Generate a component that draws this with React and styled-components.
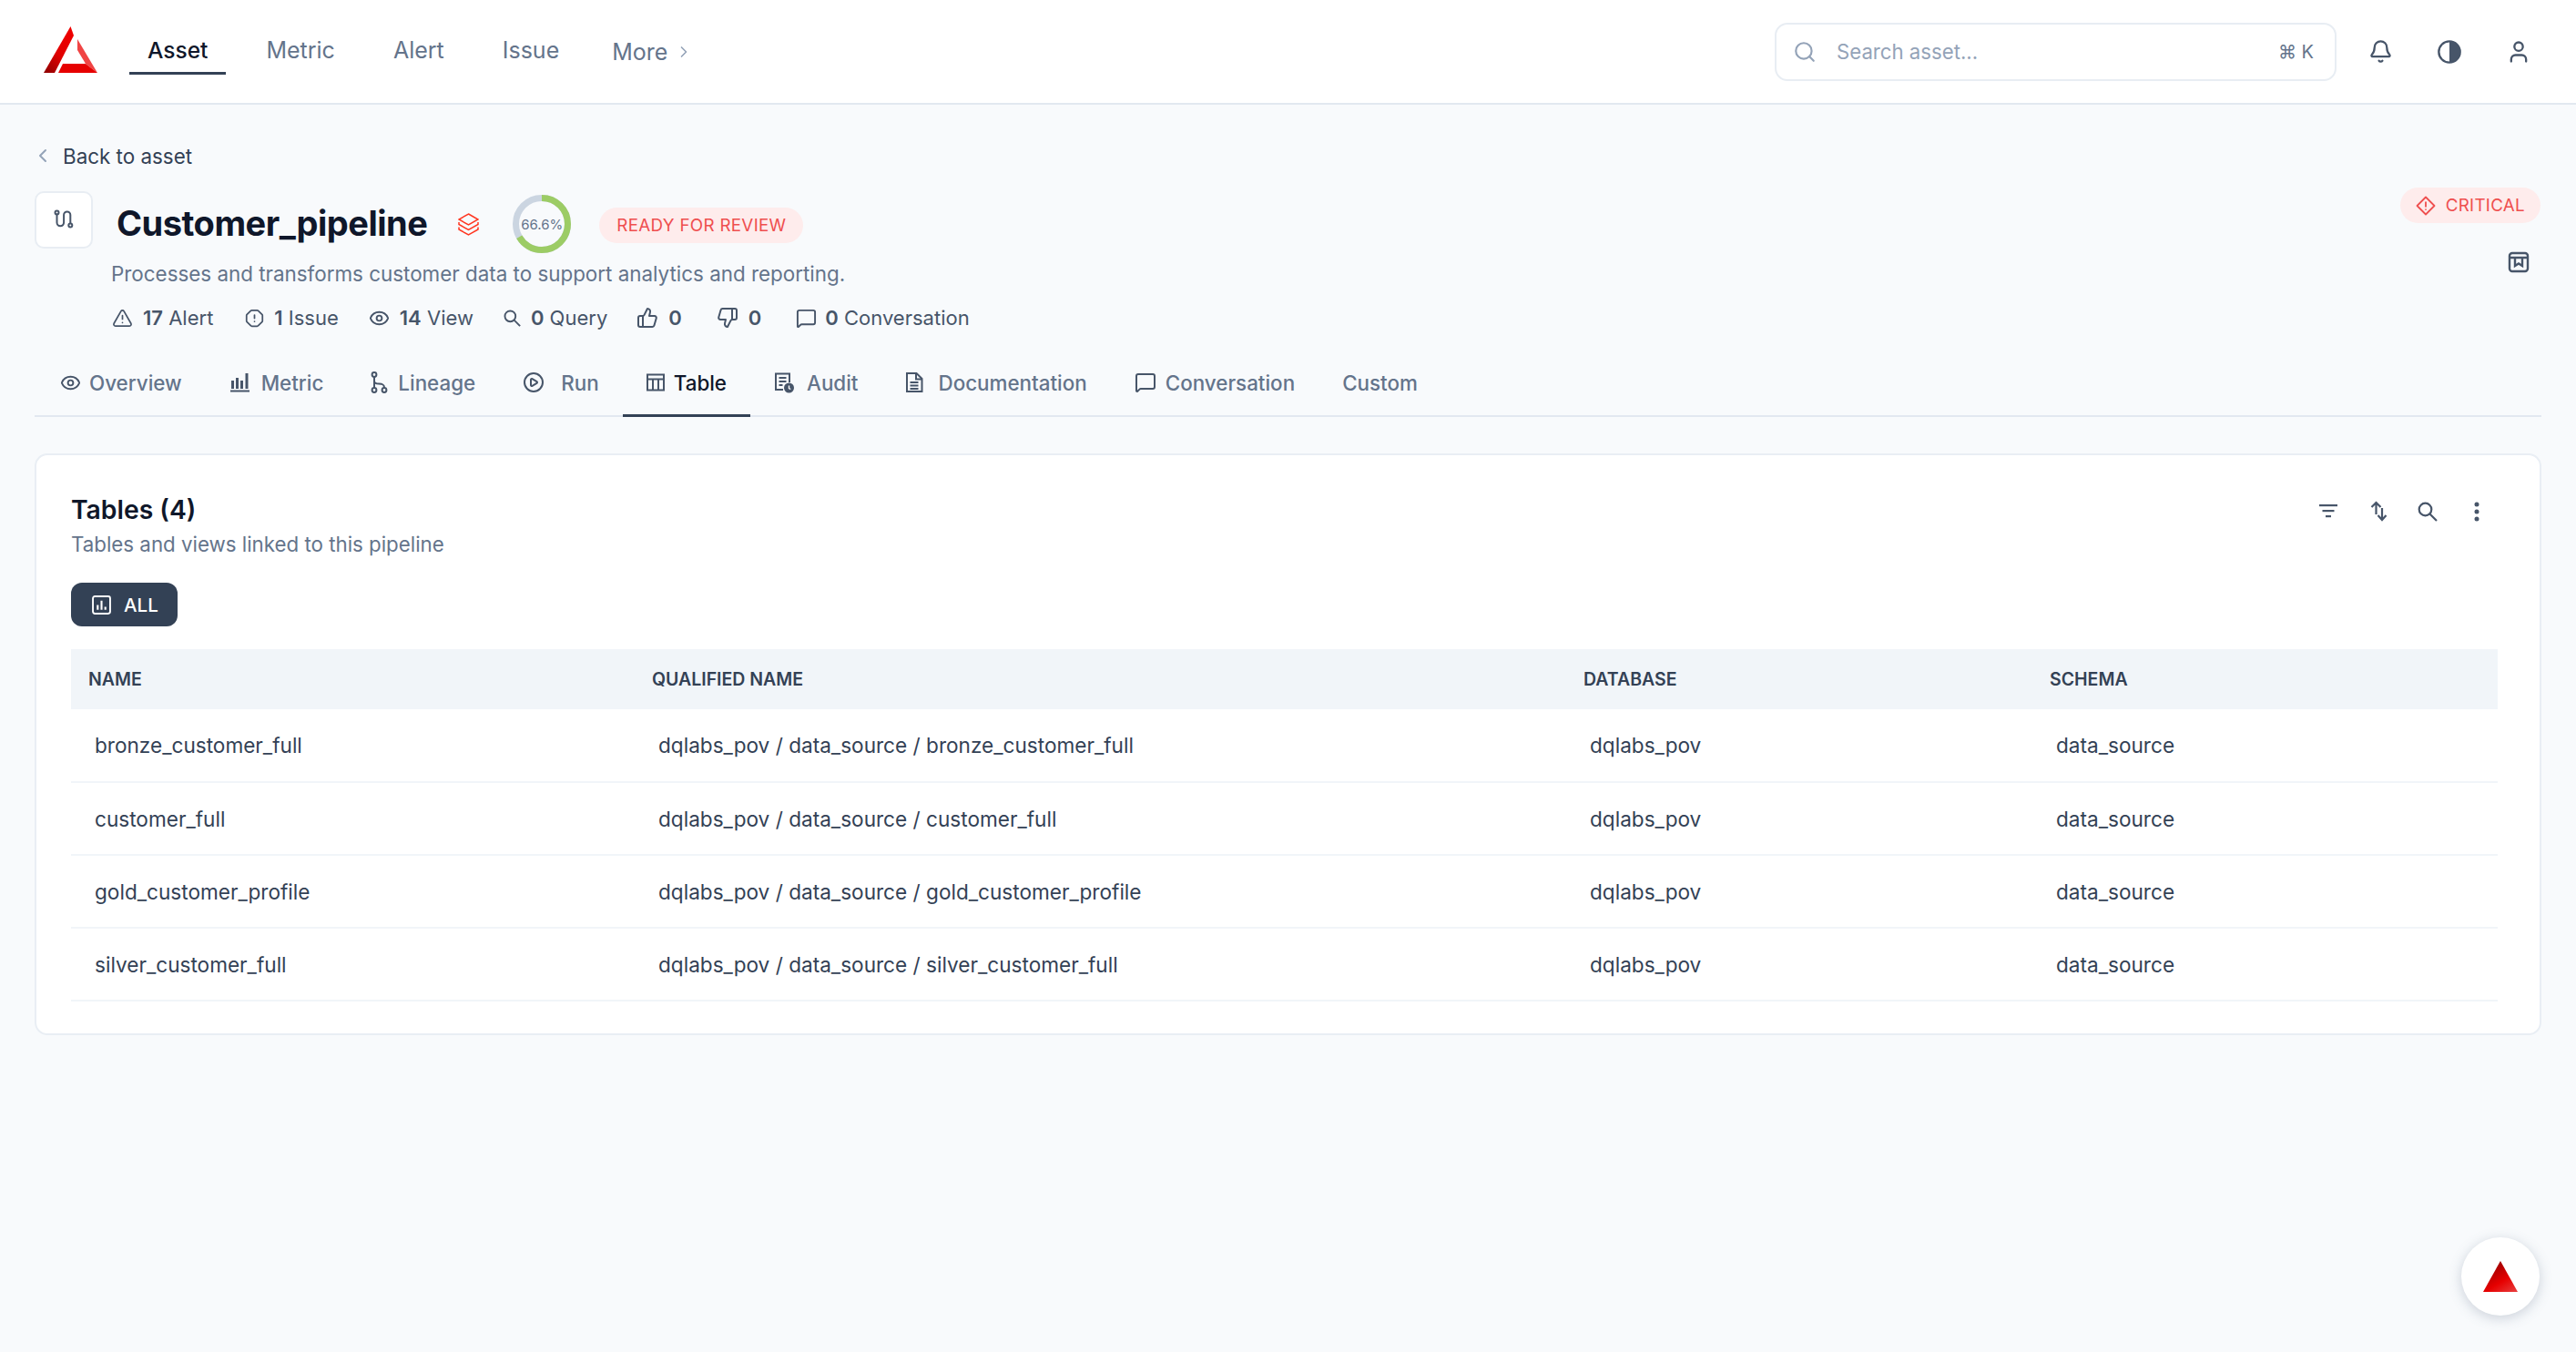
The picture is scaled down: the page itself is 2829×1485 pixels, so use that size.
import React from "react";
import styled, { createGlobalStyle } from "styled-components";
import {
  Bell,
  ChevronLeft,
  ChevronRight,
  CirclePlay,
  Eye,
  MessageSquare,
  OctagonAlert,
  Search,
  ThumbsDown,
  ThumbsUp,
  TriangleAlert,
  User
} from "lucide-react";

const GlobalStyle = createGlobalStyle`
  * { box-sizing: border-box; }
  html, body { margin: 0; padding: 0; background: #f8fafc; }
  body { font-family: Inter, "Noto Sans", sans-serif; color: #334155; }
`;

const Page = styled.div`
  position: relative;
  min-height: 1485px;
  background: #f8fafc;
`;

/* top bar */
const Header = styled.header`
  height: 115px;
  background: #fff;
  border-bottom: 2px solid #e2e8f0;
  display: flex;
  align-items: center;
  padding: 0 49px 0 48px;
`;
const Logo = styled.svg`
  width: 59px;
  height: 51px;
  flex: none;
  margin-top: -4px;
`;
const MainNav = styled.nav`
  display: flex;
  align-items: stretch;
  gap: 24px;
  height: 58px;
  margin-left: 35px;
  align-self: flex-end;
  margin-bottom: 31px;
`;
const NavLink = styled.a`
  display: flex;
  align-items: center;
  gap: 8px;
  padding: ${(p) => (p.$more ? 11 : 7)}px 20px 0;
  margin-left: ${(p) => (p.$more ? -6 : 0)}px;
  font-size: ${(p) => (p.$active ? 24.5 : 25)}px;
  font-weight: ${(p) => (p.$active ? 500 : 400)};
  color: ${(p) => (p.$active ? "#0f172a" : "#64748b")};
  border-bottom: 3px solid ${(p) => (p.$active ? "#334155" : "transparent")};
`;
const SearchBox = styled.div`
  margin-left: auto;
  width: 617px;
  height: 64px;
  display: flex;
  align-items: center;
  gap: 22px;
  padding: 0 23px 0 18px;
  background: #fff;
  border: 2px solid #e8edf3;
  border-radius: 14px;
  color: #94a3b8;
  font-size: 22.2px;
`;
const Shortcut = styled.span`
  margin-left: auto;
  font-size: 20px;
  color: #64748b;
`;
const HeaderIcons = styled.div`
  display: flex;
  align-items: center;
  gap: 48px;
  margin-left: 35px;
  color: #475569;
`;

/* asset heading */
const Main = styled.main`
  padding: 0 38px;
`;
const BackLink = styled.a`
  display: flex;
  align-items: center;
  gap: 10px;
  height: 34px;
  margin: 39px 0 0 -3px;
  font-size: 22.4px;
  color: #334155;
  svg { color: #94a3b8; }
`;
const AssetHead = styled.div`
  display: flex;
  justify-content: space-between;
  margin-top: 26px;
  padding-right: 1px;
`;
const AssetInfo = styled.div`
  display: flex;
  flex-direction: column;
`;
const TitleRow = styled.div`
  display: flex;
  align-items: center;
  height: 64px;
`;
const IconTile = styled.div`
  width: 64px;
  height: 63px;
  display: flex;
  align-items: center;
  justify-content: center;
  background: #fff;
  border: 2px solid #e8edf3;
  border-radius: 10px;
  color: #475569;
  margin-top: -10px;
`;
const Title = styled.h1`
  margin: -2px 0 0 26px;
  font-size: 38px;
  font-weight: 700;
  letter-spacing: -0.5px;
  color: #0f172a;
`;
const Ring = styled.div`
  position: relative;
  width: 64px;
  height: 64px;
  margin-left: 37px;
  display: flex;
  align-items: center;
  justify-content: center;
  font-size: 15px;
  color: #64748b;
  svg { position: absolute; inset: 0; }
`;
const Pill = styled.span`
  display: inline-flex;
  align-items: center;
  gap: 11px;
  height: 39px;
  padding: 0 ${(p) => p.$pad || 19}px;
  border-radius: 20px;
  background: #feecec;
  color: #ef4f4f;
  font-size: 18.8px;
  letter-spacing: 0.3px;
`;
const StatusPill = styled(Pill)`
  margin-left: 31px;
  margin-top: 2px;
`;
const Description = styled.p`
  margin: 9px 0 0 84px;
  line-height: 28px;
  font-size: 22.4px;
  color: #64748b;
`;
const Stats = styled.div`
  display: flex;
  align-items: center;
  height: 30px;
  margin: 19px 0 0 85px;
  font-size: 22px;
  color: #475569;
`;
const Stat = styled.span`
  display: flex;
  align-items: center;
  gap: ${(p) => p.$gap || 11}px;
  margin-right: ${(p) => p.$mr || 33}px;
  white-space: nowrap;
  b { font-weight: 600; }
  svg { color: #475569; flex: none; }
`;
const AssetSide = styled.div`
  display: flex;
  flex-direction: column;
  align-items: flex-end;
  margin-top: -8px;
  color: #475569;
  gap: 31px;
`;
const SideIcon = styled.svg`
  margin-right: 12px;
`;

/* tabs */
const Tabs = styled.div`
  display: flex;
  height: 78px;
  margin-top: 16px;
  padding: 0 2px;
  border-bottom: 2px solid #e2e8f0;
`;
const Tab = styled.a`
  display: flex;
  align-items: center;
  gap: ${(p) => p.$gap || 12}px;
  height: 78px;
  padding: 5px 26px 0;
  font-size: 22.4px;
  font-weight: 500;
  color: ${(p) => (p.$active ? "#0f172a" : "#64748b")};
  border-bottom: 3px solid ${(p) => (p.$active ? "#334155" : "transparent")};
  svg { color: #475569; flex: none; }
`;

/* tables card */
const Card = styled.section`
  margin-top: 40px;
  height: 639px;
  padding: 41px 46px 0 38px;
  background: #fff;
  border: 2px solid #e9eef4;
  border-radius: 14px;
`;
const CardHead = styled.div`
  display: flex;
  justify-content: space-between;
  align-items: flex-start;
`;
const CardTitle = styled.h2`
  margin: 0;
  line-height: 38px;
  font-size: 28.3px;
  font-weight: 600;
  color: #0f172a;
`;
const CardSub = styled.p`
  margin: 4px 0 0;
  line-height: 30px;
  font-size: 22.3px;
  color: #64748b;
`;
const Tools = styled.div`
  display: flex;
  align-items: center;
  gap: 36px;
  padding: 9px 20px 0 0;
  color: #475569;
`;
const ToolSearch = styled.svg`
  margin: 0 4px 0 -4px;
`;
const FilterButton = styled.button`
  display: inline-flex;
  align-items: center;
  gap: 14px;
  height: 48px;
  margin-top: 27px;
  padding: 0 21px 0 23px;
  border: 0;
  border-radius: 12px;
  background: #334155;
  color: #fff;
  font: 500 20.5px Inter, sans-serif;
`;
const Table = styled.table`
  width: 100%;
  margin-top: 25px;
  border-collapse: collapse;
  table-layout: fixed;
`;
const Th = styled.th`
  height: 66px;
  width: ${(p) => p.$w}px;
  padding: 0 0 0 19px;
  background: #f1f5f9;
  text-align: left;
  font-size: 19.5px;
  font-weight: 600;
  color: #334155;
  text-transform: uppercase;
`;
const Td = styled.td`
  height: 80px;
  padding: 0 0 0 26px;
  border-bottom: 2px solid #f1f5f9;
  font-size: 22.6px;
  color: #334155;
`;

const ChatFab = styled.button`
  position: absolute;
  left: 2703px;
  top: 1359px;
  width: 86px;
  height: 86px;
  display: flex;
  align-items: center;
  justify-content: center;
  border: 0;
  border-radius: 50%;
  background: #fff;
  box-shadow: 0 3px 14px rgba(100, 116, 139, 0.3);
`;

const PipelineIcon = () => (
  <svg width="22" height="24" viewBox="0 0 22 22" fill="none" stroke="currentColor" strokeWidth="2">
    <circle cx="3.5" cy="3.5" r="2" />
    <path d="M3.5 5.5V14.5a3.8 3.8 0 0 0 7.6 0V6a3.6 3.6 0 0 1 7.2 0V15" strokeLinecap="round" />
    <circle cx="18.3" cy="17.5" r="2" />
  </svg>
);
const StackIcon = () => (
  <svg width="23" height="25" viewBox="0 0 23 25" fill="none" stroke="#ff3621" strokeWidth="1.5" style={{ marginLeft: 34 }}>
    <path d="M11.5 1 22 7 11.5 13 1 7Z" />
    <path d="M1 10v2.5l10.5 6 10.5-6V10" />
    <path d="M1 15.5V18l10.5 6L22 18v-2.5" />
  </svg>
);
const QueryIcon = ({ size = 22 }) => (
  <svg width={size} height={size} viewBox="0 0 22 22" fill="none" stroke="currentColor" strokeWidth="2.2">
    <circle cx="8.5" cy="8.5" r="6.8" />
    <path d="M13.500 13.500 21 21" />
  </svg>
);
const MetricIcon = () => (
  <svg width="23" height="22" viewBox="0 0 23 22" fill="currentColor">
    <rect x="2" y="9" width="3" height="9" />
    <rect x="7" y="6" width="3" height="12" />
    <rect x="12" y="9" width="3" height="9" />
    <rect x="17.5" y="1" width="3" height="17" />
    <rect x="1" y="19.5" width="21" height="2" />
  </svg>
);
const LineageIcon = () => (
  <svg width="19" height="24" viewBox="0 0 19 24" fill="none" stroke="currentColor" strokeWidth="2">
    <circle cx="4" cy="3.5" r="2.4" />
    <circle cx="4" cy="20.5" r="2.4" />
    <circle cx="15" cy="20.5" r="2.4" />
    <path d="M4 6v12M4 10.5c0 2.5 2 3 5 3 3.500 0 6 .5 6 4.500" />
  </svg>
);
const TableIcon = () => (
  <svg width="20" height="20" viewBox="0 0 20 20" fill="none" stroke="currentColor" strokeWidth="2">
    <rect x="1" y="1.500" width="18" height="17" />
    <path d="M1 6.500h18M7 6.500v12M13 6.500v12" />
  </svg>
);
const AuditIcon = () => (
  <svg width="22" height="23" viewBox="0 0 22 23" fill="none" stroke="currentColor" strokeWidth="2">
    <path d="M10 19H2V1.500h15V11" />
    <path d="M5.500 6h8M5.500 10h8M5.500 14h4" />
    <circle cx="16.500" cy="17" r="5.500" fill="currentColor" stroke="none" />
    <path d="M16.500 14.500V17.500l1.800 1" stroke="#fff" strokeWidth="1.400" />
  </svg>
);
const DocIcon = () => (
  <svg width="20" height="24" viewBox="0 0 20 24" fill="none" stroke="currentColor" strokeWidth="2">
    <path d="M2 2h10.500L18.500 8v14H2Z" />
    <path d="M12 2v6.500h6.500M5.500 12h9M5.500 15.500h9M5.500 19h9" />
  </svg>
);
const ContrastIcon = () => (
  <svg width="28" height="28" viewBox="0 0 24 24" fill="none">
    <circle cx="12" cy="12" r="10" stroke="currentColor" strokeWidth="2" />
    <path d="M12 2a10 10 0 0 1 0 20Z" fill="currentColor" />
  </svg>
);
const CriticalIcon = () => (
  <svg width="22" height="22" viewBox="0 0 22 22" fill="none" stroke="currentColor" strokeWidth="1.800">
    <path d="M11 1.500 20.500 11 11 20.500 1.500 11Z" strokeLinejoin="round" />
    <path d="M11 6.500v6M11 14.500v1.200" />
  </svg>
);
const BookmarkIcon = () => (
  <SideIcon width="24" height="24" viewBox="0 0 24 24" fill="none" stroke="currentColor" strokeWidth="2.400">
    <rect x="2" y="2" width="20" height="20" rx="3" />
    <path d="M2 7h20M8 7v9l4-2.500 4 2.500V7" />
  </SideIcon>
);
const FilterIcon = () => (
  <svg width="20" height="15" viewBox="0 0 20 15" fill="currentColor">
    <rect width="20" height="2.200" />
    <rect x="3.500" y="6" width="13" height="2.200" />
    <rect x="7" y="12" width="6" height="2.200" />
  </svg>
);
const SortIcon = () => (
  <svg width="20" height="23" viewBox="0 0 20 23" fill="none" stroke="currentColor" strokeWidth="2.200">
    <path d="M6.500 2v13M1.500 7l5-5 5 5M13 8v13M8.500 16l4.500 5 4.500-5" />
  </svg>
);
const DotsIcon = () => (
  <svg width="6" height="22" viewBox="0 0 6 22" fill="currentColor">
    <circle cx="3" cy="3" r="2.500" />
    <circle cx="3" cy="11" r="2.500" />
    <circle cx="3" cy="19" r="2.500" />
  </svg>
);
const ReportIcon = () => (
  <svg width="21" height="21" viewBox="0 0 20 20" fill="none" stroke="currentColor" strokeWidth="1.800">
    <rect x="1" y="1" width="18" height="18" rx="2" />
    <path d="M6 15V10M10 15V5.500M14 15v-3" strokeWidth="2" />
  </svg>
);

const tabs = [
  { label: "Overview", icon: <Eye size={23} strokeWidth={2} />, gap: 9 },
  { label: "Metric", icon: <MetricIcon /> },
  { label: "Lineage", icon: <LineageIcon />, gap: 11 },
  { label: "Run", icon: <CirclePlay size={24} strokeWidth={2} />, gap: 18 },
  { label: "Table", icon: <TableIcon />, gap: 10, active: true },
  { label: "Audit", icon: <AuditIcon />, gap: 14 },
  { label: "Documentation", icon: <DocIcon />, gap: 16 },
  { label: "Conversation", icon: <MessageSquare size={24} strokeWidth={2} />, gap: 10 },
  { label: "Custom" }
];

const rows = [
  "bronze_customer_full",
  "customer_full",
  "gold_customer_profile",
  "silver_customer_full"
];

export default function App() {
  return (
    <Page>
      <GlobalStyle />
      <Header>
        <Logo viewBox="0 0 59 51">
          <defs>
            <linearGradient id="logoLeft" x1="0" y1="1" x2="0.6" y2="0">
              <stop offset="0" stopColor="#8c0000" />
              <stop offset="0.5" stopColor="#e00000" />
              <stop offset="1" stopColor="#ee0000" />
            </linearGradient>
          </defs>
          <polygon points="29.500,0 33,10 12,51 0,51" fill="url(#logoLeft)" />
          <polygon points="37,14 59,51 46,41 37,26" fill="#f04444" />
          <polygon points="16,51 21,41 46,41 59,51" fill="#e60000" />
        </Logo>
        <MainNav>
          <NavLink $active>Asset</NavLink>
          <NavLink>Metric</NavLink>
          <NavLink>Alert</NavLink>
          <NavLink>Issue</NavLink>
          <NavLink $more>
            More <ChevronRight size={20} color="#94a3b8" />
          </NavLink>
        </MainNav>
        <SearchBox>
          <Search size={26} strokeWidth={2} />
          Search asset...
          <Shortcut>⌘ K</Shortcut>
        </SearchBox>
        <HeaderIcons>
          <Bell size={27} strokeWidth={2} />
          <ContrastIcon />
          <User size={28} strokeWidth={2} />
        </HeaderIcons>
      </Header>

      <Main>
        <BackLink>
          <ChevronLeft size={24} />
          Back to asset
        </BackLink>
        <AssetHead>
          <AssetInfo>
            <TitleRow>
              <IconTile>
                <PipelineIcon />
              </IconTile>
              <Title>Customer_pipeline</Title>
              <StackIcon />
              <Ring>
                <svg viewBox="0 0 64 64" width="64" height="64" fill="none" strokeWidth="7">
                  <circle cx="32" cy="32" r="28.500" stroke="#cbd5e1" />
                  <circle
                    cx="32"
                    cy="32"
                    r="28.500"
                    stroke="#9ccc65"
                    strokeDasharray={`${2 * Math.PI * 28.5 * 0.666} 1000`}
                    transform="rotate(-90 32 32)"
                  />
                </svg>
                66.6%
              </Ring>
              <StatusPill>READY FOR REVIEW</StatusPill>
            </TitleRow>
            <Description>Processes and transforms customer data to support analytics and reporting.</Description>
            <Stats>
              <Stat $mr={35}>
                <TriangleAlert size={23} strokeWidth={1.8} />
                <span>
                  <b>17</b> Alert
                </span>
              </Stat>
              <Stat>
                <OctagonAlert size={21} strokeWidth={2} />
                <span>
                  <b>1</b> Issue
                </span>
              </Stat>
              <Stat>
                <Eye size={23} strokeWidth={2} />
                <span>
                  <b>14</b> View
                </span>
              </Stat>
              <Stat $mr={32}>
                <QueryIcon size={19} />
                <span>
                  <b>0</b> Query
                </span>
              </Stat>
              <Stat $mr={38}>
                <ThumbsUp size={24} strokeWidth={2} />
                <b>0</b>
              </Stat>
              <Stat $mr={38}>
                <ThumbsDown size={24} strokeWidth={2} />
                <b>0</b>
              </Stat>
              <Stat $gap={9}>
                <MessageSquare size={23} strokeWidth={2} />
                <span>
                  <b>0</b> Conversation
                </span>
              </Stat>
            </Stats>
          </AssetInfo>
          <AssetSide>
            <Pill $pad={17}>
              <CriticalIcon />
              CRITICAL
            </Pill>
            <BookmarkIcon />
          </AssetSide>
        </AssetHead>

        <Tabs>
          {tabs.map((tab) => (
            <Tab key={tab.label} $active={tab.active} $gap={tab.gap}>
              {tab.icon}
              {tab.label}
            </Tab>
          ))}
        </Tabs>

        <Card>
          <CardHead>
            <div>
              <CardTitle>Tables (4)</CardTitle>
              <CardSub>Tables and views linked to this pipeline</CardSub>
            </div>
            <Tools>
              <FilterIcon />
              <SortIcon />
              <ToolSearch width="22" height="22" viewBox="0 0 22 22" fill="none" stroke="currentColor" strokeWidth="2.200">
                <circle cx="8.500" cy="8.500" r="6.800" />
                <path d="M13.500 13.500 21 21" />
              </ToolSearch>
              <DotsIcon />
            </Tools>
          </CardHead>
          <FilterButton>
            <ReportIcon />
            ALL
          </FilterButton>
          <Table>
            <thead>
              <tr>
                <Th $w={619}>Name</Th>
                <Th $w={1023}>Qualified name</Th>
                <Th $w={512}>Database</Th>
                <Th>Schema</Th>
              </tr>
            </thead>
            <tbody>
              {rows.map((name) => (
                <tr key={name}>
                  <Td>{name}</Td>
                  <Td>dqlabs_pov / data_source / {name}</Td>
                  <Td>dqlabs_pov</Td>
                  <Td>data_source</Td>
                </tr>
              ))}
            </tbody>
          </Table>
        </Card>
      </Main>

      <ChatFab aria-label="assistant">
        <svg width="38" height="34" viewBox="0 0 38 34">
          <defs>
            <linearGradient id="fabRed" x1="0.2" y1="0" x2="0.9" y2="1">
              <stop offset="0" stopColor="#8c0000" />
              <stop offset="0.6" stopColor="#e60000" />
              <stop offset="1" stopColor="#e83a3a" />
            </linearGradient>
          </defs>
          <polygon points="19,0 38,34 0,34" fill="url(#fabRed)" />
        </svg>
      </ChatFab>
    </Page>
  );
}
